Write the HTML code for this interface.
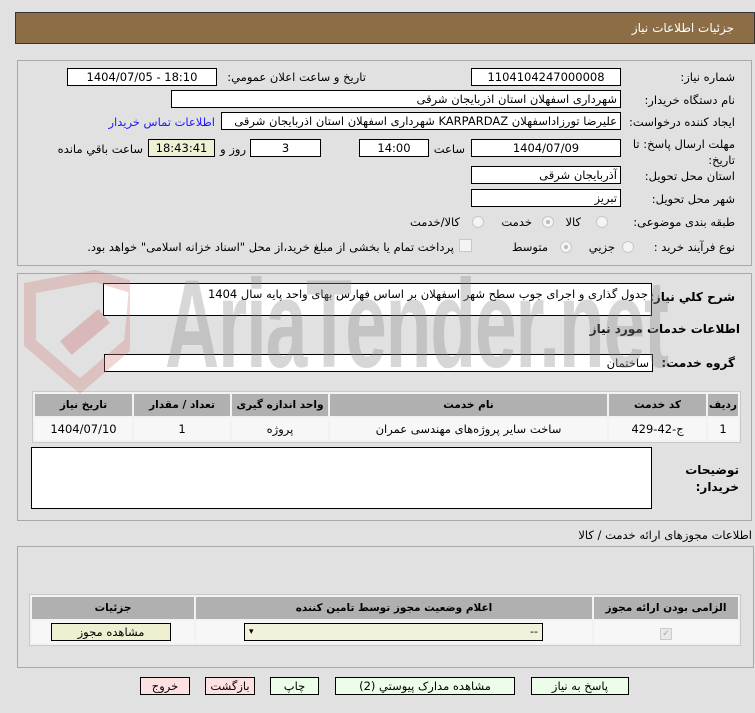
<!DOCTYPE html>
<html><head><meta charset="utf-8"><style>
*{box-sizing:border-box;margin:0;padding:0}
body{width:755px;height:713px;background:#e1e1e1;font-family:"DejaVu Sans","Liberation Sans",sans-serif;font-size:11px;color:#000;position:relative;overflow:hidden}
.a{position:absolute;white-space:nowrap}
.hdr{left:15px;top:12px;width:740px;height:32px;background:#8c6d46;border:1px solid #333;color:#fff;font-size:12px;text-align:right;padding:8px 20px 0 0}
.panel{position:absolute;border:1px solid #a8a8a8;background:#e1e1e1}
.in{position:absolute;background:#fff;border:1px solid #000;height:18px;text-align:center;line-height:16px;font-size:11.5px}
.r{text-align:right;padding-right:3px}
.lbl{position:absolute;white-space:nowrap;text-align:right;font-size:11.5px;direction:rtl}
.rad{position:absolute;width:12px;height:12px;border-radius:50%;border:1px solid #c8c8c8;background:#f4f4f4}
.rad.on::after{content:"";position:absolute;left:3px;top:3px;width:4px;height:4px;border-radius:50%;background:#bbb}
table{position:absolute;border-collapse:separate;border-spacing:2px;background:#f2f2f2;border:1px solid #c8c8c8}
th{background:#b0b0b0;font-size:10.5px;font-weight:bold;height:22px;text-align:center}
td{background:#f7f7f7;height:22px;text-align:center;font-size:11.5px}
.btn{position:absolute;height:18px;border:1px solid #000;background:#ecfde9;text-align:center;line-height:16px;font-size:11.5px}
.wm{left:165px;top:262px;font-family:"Liberation Sans",sans-serif;font-weight:bold;font-size:125px;line-height:125px;color:rgba(140,140,140,.35);transform:scaleX(.6);transform-origin:left top;letter-spacing:-2px;z-index:5}
</style></head><body>
<div class="a hdr" dir="rtl">جزئیات اطلاعات نیاز</div>

<div class="panel" style="left:17px;top:60px;width:735px;height:206px"></div>
<div class="panel" style="left:17px;top:273px;width:735px;height:248px"></div>

<div class="lbl" style="right:20px;top:70px">شماره نیاز:</div>
<div class="in" style="left:471px;top:68px;width:150px">1104104247000008</div>
<div class="lbl" style="right:389px;top:70px">تاريخ و ساعت اعلان عمومي:</div>
<div class="in" style="left:67px;top:68px;width:150px">1404/07/05 - 18:10</div>

<div class="lbl" style="right:20px;top:93px">نام دستگاه خريدار:</div>
<div class="in r" style="left:171px;top:90px;width:450px" dir="rtl">شهرداری اسفهلان استان اذربایجان شرقی</div>

<div class="lbl" style="right:20px;top:115px">ایجاد کننده درخواست:</div>
<div class="in r" style="left:221px;top:112px;width:400px" dir="rtl">علیرضا تورزاداسفهلان KARPARDAZ شهرداری اسفهلان استان اذربایجان شرقی</div>
<div class="lbl" style="right:540px;top:115px;color:#1a1aff">اطلاعات تماس خريدار</div>

<div class="lbl" style="right:20px;top:136px;line-height:16px">مهلت ارسال پاسخ: تا<br>تاریخ:</div>
<div class="in" style="left:471px;top:139px;width:150px">1404/07/09</div>
<div class="lbl" style="right:290px;top:142px">ساعت</div>
<div class="in" style="left:359px;top:139px;width:70px">14:00</div>
<div class="in" style="left:250px;top:139px;width:71px">3</div>
<div class="lbl" style="right:509px;top:142px">روز و</div>
<div class="in" style="left:148px;top:139px;width:67px;background:#f0f0d5">18:43:41</div>
<div class="lbl" style="right:612px;top:142px">ساعت باقي مانده</div>

<div class="lbl" style="right:20px;top:169px">استان محل تحویل:</div>
<div class="in r" style="left:471px;top:166px;width:150px" dir="rtl">آذربایجان شرقی</div>
<div class="lbl" style="right:20px;top:192px">شهر محل تحویل:</div>
<div class="in r" style="left:471px;top:189px;width:150px" dir="rtl">تبریز</div>

<div class="lbl" style="right:20px;top:215px">طبقه بندی موضوعی:</div>
<div class="rad" style="left:596px;top:216px"></div><div class="lbl" style="right:174px;top:215px">کالا</div>
<div class="rad on" style="left:542px;top:216px"></div><div class="lbl" style="right:223px;top:215px">خدمت</div>
<div class="rad" style="left:472px;top:216px"></div><div class="lbl" style="right:295px;top:215px">کالا/خدمت</div>

<div class="lbl" style="right:20px;top:240px">نوع فرآیند خرید :</div>
<div class="rad" style="left:622px;top:241px"></div><div class="lbl" style="right:140px;top:240px">جزيي</div>
<div class="rad on" style="left:560px;top:241px"></div><div class="lbl" style="right:207px;top:240px">متوسط</div>
<div class="a" style="left:459px;top:239px;width:13px;height:13px;border:1px solid #c8c8c8;background:#f4f4f4"></div>
<div class="lbl" style="right:301px;top:240px">پرداخت تمام یا بخشی از مبلغ خرید،از محل "اسناد خزانه اسلامی" خواهد بود.</div>

<div class="lbl" style="right:20px;top:290px;font-weight:bold;font-size:12px">شرح کلي نياز:</div>
<div class="in r" style="left:103px;top:283px;width:549px;height:33px;background:#fff;text-align:right;line-height:20px" dir="rtl">جدول گذاری و اجرای جوب سطح شهر اسفهلان بر اساس فهارس بهای واحد پایه سال 1404</div>
<div class="lbl" style="right:15px;top:322px;font-weight:bold;font-size:12px">اطلاعات خدمات مورد نیاز</div>
<div class="lbl" style="right:20px;top:356px;font-weight:bold;font-size:12px">گروه خدمت:</div>
<div class="in r" style="left:104px;top:354px;width:549px" dir="rtl">ساختمان</div>

<svg class="a" style="left:20px;top:268px;z-index:5" width="110" height="130" viewBox="0 0 110 130"><path d="M10 20 L75 8 L115 20 L110 75 L60 118 L10 75 Z" fill="none" stroke="rgba(210,120,120,.3)" stroke-width="12"/><rect x="40" y="55" width="50" height="18" fill="rgba(200,110,110,.35)" transform="rotate(-40 65 64)"/></svg>
<div class="a wm">AriaTender.net</div>

<table style="left:32px;top:391px;width:709px" dir="rtl">
<tr><th style="width:30px">ردیف</th><th style="width:97px">کد خدمت</th><th>نام خدمت</th><th style="width:96px">واحد اندازه گیری</th><th style="width:96px">تعداد / مقدار</th><th style="width:97px">تاریخ نیاز</th></tr>
<tr><td>1</td><td>ج-42-429</td><td>ساخت سایر پروژه‌های مهندسی عمران</td><td>پروژه</td><td>1</td><td>1404/07/10</td></tr>
</table>

<div class="in" style="left:31px;top:447px;width:621px;height:62px"></div>
<div class="lbl" style="right:16px;top:462px;font-weight:bold;font-size:12px;line-height:17px">توضیحات<br>خریدار:</div>

<div class="lbl" style="right:3px;top:528px">اطلاعات مجوزهای ارائه خدمت / کالا</div>
<div class="panel" style="left:17px;top:546px;width:737px;height:122px"></div>
<table style="left:29px;top:594px;width:712px" dir="rtl">
<tr><th style="width:144px">الزامی بودن ارائه مجوز</th><th>اعلام وضعیت مجوز توسط تامین کننده</th><th style="width:162px">جزئیات</th></tr>
<tr><td><span style="display:inline-block;width:12px;height:12px;border:1px solid #ccc;background:#e8e8e8;color:#aaa;font-size:9px;line-height:11px">✓</span></td><td></td><td></td></tr>
</table>
<div class="in" style="left:244px;top:623px;width:299px;height:18px;background:#f1f1dc;text-align:left;padding:0 4px;font-size:9px">▾<span style="float:right;font-size:11px">--</span></div>
<div class="btn" style="left:51px;top:623px;width:120px;background:#efefd2">مشاهده مجوز</div>

<div class="btn" style="left:531px;top:677px;width:98px">پاسخ به نیاز</div>
<div class="btn" style="left:335px;top:677px;width:180px">مشاهده مدارک پیوستي (2)</div>
<div class="btn" style="left:270px;top:677px;width:49px">چاپ</div>
<div class="btn" style="left:205px;top:677px;width:50px;background:#fde0e0">بازگشت</div>
<div class="btn" style="left:140px;top:677px;width:50px;background:#fde0e0">خروج</div>
</body></html>
